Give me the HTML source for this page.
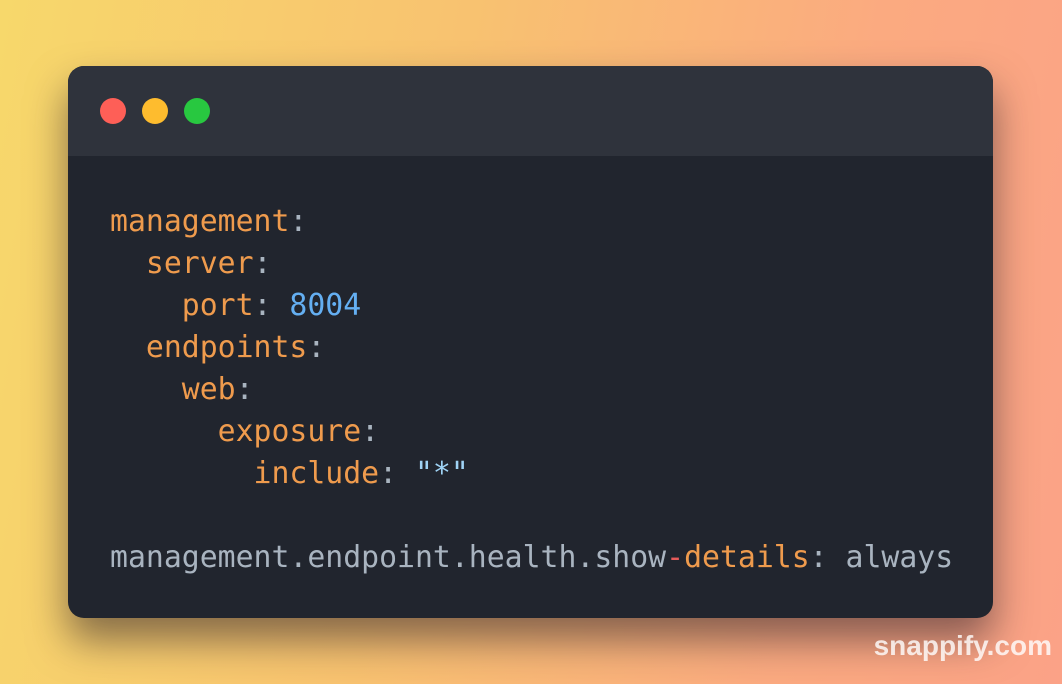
<!DOCTYPE html>
<html><head><style>
html,body{margin:0;padding:0;}
body{width:1062px;height:684px;overflow:hidden;position:relative;
background:linear-gradient(100deg,#f7d86b 0%,#f8c270 40%,#fbaa80 75%,#fba287 100%);
font-family:"Liberation Sans",sans-serif;}
.win{position:absolute;left:68px;top:66px;width:925px;height:552px;border-radius:16px;overflow:hidden;background:#21252e;
box-shadow:0 22px 40px rgba(40,30,40,0.55);}
.bar{height:90px;background:#2f333c;position:relative;}
.dot{position:absolute;top:32px;width:26px;height:26px;border-radius:50%;}
pre{margin:0;position:absolute;left:42px;top:135px;font-family:"DejaVu Sans Mono","Liberation Mono",monospace;font-size:29.8px;line-height:42px;color:#a9b4c0;letter-spacing:0;}
.k{color:#ef9b4d}.n{color:#64aff2}.s{color:#9fd3f5}.r{color:#e65b5a}
.wm{position:absolute;right:10px;top:630px;font-weight:bold;font-size:28px;color:rgba(255,255,255,0.8);}
</style></head><body>
<div class="win">
<div class="bar">
<div class="dot" style="left:32px;background:#fe5f57"></div>
<div class="dot" style="left:74px;background:#febc2e"></div>
<div class="dot" style="left:116px;background:#28c840"></div>
</div>
<pre><span class="k">management</span>:
  <span class="k">server</span>:
    <span class="k">port</span>: <span class="n">8004</span>
  <span class="k">endpoints</span>:
    <span class="k">web</span>:
      <span class="k">exposure</span>:
        <span class="k">include</span>: <span class="s">"*"</span>

management.endpoint.health.show<span class="r">-</span><span class="k">details</span>: always</pre>
</div>
<div class="wm">snappify.com</div>
</body></html>
